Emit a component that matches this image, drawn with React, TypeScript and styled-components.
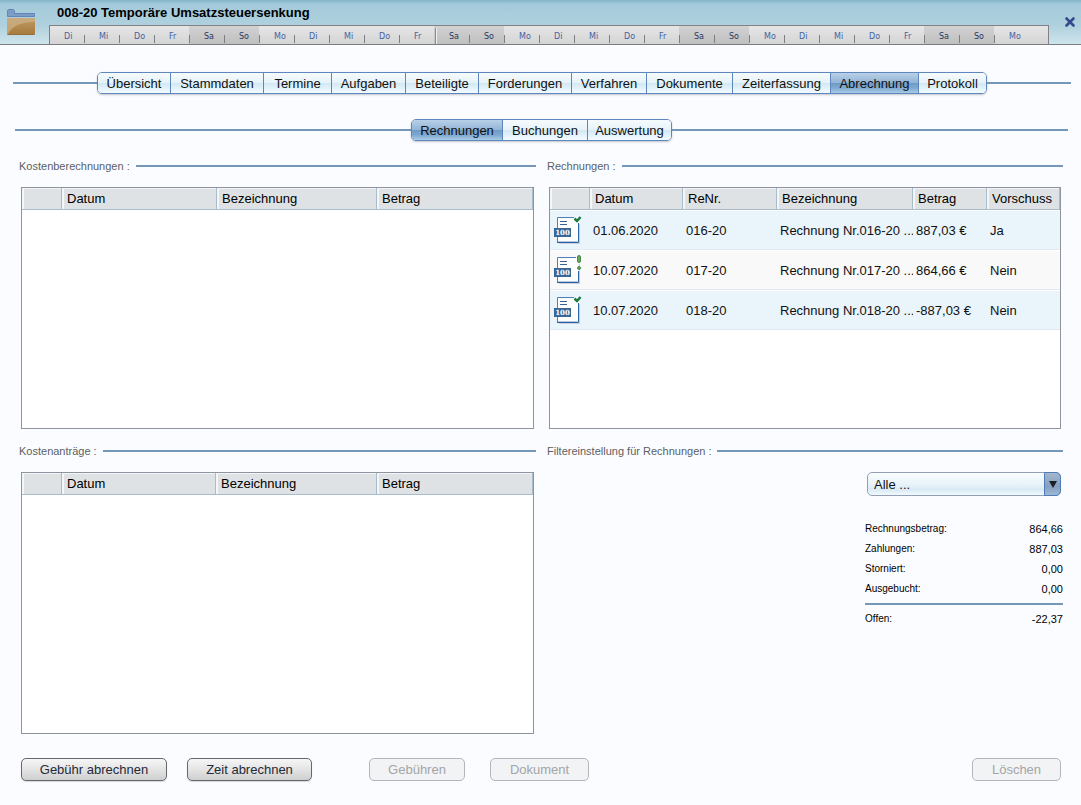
import React from "react";
import styled, { createGlobalStyle, css } from "styled-components";

const LINE = "#7598b8";
const SANS = '"Liberation Sans", Arial, sans-serif';

const GlobalStyle = createGlobalStyle`
  * { box-sizing: border-box; }
  body {
    margin: 0;
    background: #fbfcff;
    color: #111;
    font-family: ${SANS};
    font-size: 13px;
    line-height: 16px;
  }
  button, select { font: inherit; color: inherit; margin: 0; }
`;

const Header = styled.header`
  display: flex;
  height: 45px;
  border-bottom: 1px solid #7a7d80;
  background: linear-gradient(#84b5ca 0, #a3cadb 4px, #b0d1de 26px, #cfe4ec 100%);
`;

const FolderSlot = styled.div`
  width: 49px;
  padding: 9px 0 0 7px;
`;

const HeaderMain = styled.div`
  flex: 1;
  min-width: 0;
  display: flex;
  flex-direction: column;
  justify-content: space-between;
`;

const Title = styled.h1`
  margin: 0;
  padding: 5px 8px 0;
  font-size: 13px;
  line-height: 16px;
  font-weight: bold;
  white-space: nowrap;
  color: #000;
`;

const DayStrip = styled.ol`
  display: flex;
  height: 19px;
  margin: 0;
  padding: 0;
  list-style: none;
  border: 1px solid #808285;
  border-bottom: 0;
  border-left: 0;
  background: linear-gradient(#e6e6e6, #d4d4d4);
`;

const Day = styled.li<{ $weekend: boolean; $month: boolean; $grow: number }>`
  flex: ${(p) => p.$grow} 1 0;
  position: relative;
  padding: 6px 0 0;
  text-indent: 15px;
  font: 8px/10px "DejaVu Sans", sans-serif;
  color: #44619f;
  ${(p) =>
    p.$weekend &&
    css`
      color: #26365f;
      background: linear-gradient(#d2d2d2, #bfbfbf);
    `}
  &::before {
    content: "";
    position: absolute;
    left: 0;
    bottom: 1px;
    width: 1px;
    height: 8px;
    background: #7d7d88;
  }
  &:first-child::before {
    bottom: 0;
    height: 18px;
  }
  ${(p) =>
    p.$month &&
    css`
      &::before {
        left: 1px;
        bottom: 0;
        width: 2px;
        height: 16px;
        background: linear-gradient(90deg, #8a8a8a 50%, #f0f0f0 50%);
      }
    `}
`;

const CloseSlot = styled.div`
  width: 32px;
  padding: 16px 0 0 14px;
`;

const CloseButton = styled.button`
  display: block;
  width: 14px;
  height: 14px;
  padding: 0;
  border: 0;
  background: none;
`;

const TabRow = styled.nav<{ $inner?: boolean }>`
  display: flex;
  align-items: center;
  margin: ${(p) => (p.$inner ? "25px 13px 0 15px" : "27px 10px 0 13px")};
  &::before,
  &::after {
    content: "";
    flex: 1;
    height: 2px;
    background: ${LINE};
  }
`;

const TabGroup = styled.div`
  display: flex;
  height: 22px;
  border: 1px solid #5e88bd;
  border-radius: 5px;
  overflow: hidden;
  box-shadow: 0 1px 2px rgba(60, 70, 90, 0.3);
`;

const Tab = styled.button<{ $width: number; $active: boolean }>`
  width: ${(p) => p.$width}px;
  padding: 2px 0 0;
  border: 0;
  line-height: 16px;
  text-align: center;
  white-space: nowrap;
  background: ${(p) =>
    p.$active
      ? "linear-gradient(#b9d0e8 0, #93b5d6 48%, #6f9bc7 52%, #7fa9d1 75%, #a9cbe6 100%)"
      : "linear-gradient(#f6fbfd 0, #e6f3f9 48%, #d3e8f3 52%, #e2f2fa 75%, #f3fbff 100%)"};
  & + & {
    border-left: 1px solid #5e88bd;
  }
`;

const Columns = styled.main`
  display: grid;
  grid-template-columns: 517fr 516fr;
  column-gap: 11px;
  row-gap: 14px;
  padding: 17px 18px 0 19px;
`;

const Panel = styled.section`
  min-width: 0;
`;

const PanelTitle = styled.h2`
  display: flex;
  align-items: center;
  gap: 6px;
  height: 16px;
  margin: 0 0 13px;
  font-size: 11px;
  line-height: 16px;
  font-weight: normal;
  white-space: nowrap;
  color: #5c5f63;
  &::after {
    content: "";
    flex: 1;
    height: 2px;
    background: ${LINE};
  }
`;

const ListBox = styled.div<{ $height: number }>`
  height: ${(p) => p.$height}px;
  margin: 0 2px;
  border: 1px solid #8d939f;
  background: #fff;
  overflow: hidden;
`;

const Table = styled.table`
  width: 100%;
  table-layout: fixed;
  border-collapse: separate;
  border-spacing: 0;
`;

const Th = styled.th`
  height: 22px;
  padding: 0 0 0 5px;
  font-weight: normal;
  text-align: left;
  white-space: nowrap;
  background: #dee2e4;
  border-right: 1px solid #a9bccb;
  border-bottom: 1px solid #a9bccb;
  box-shadow: inset 2px 1px 0 #f3f5f6;
  color: #000;
`;

const Row = styled.tr`
  background: #e9f4fb;
  &:nth-child(even) {
    background: #f9f9f9;
  }
`;

const Td = styled.td`
  height: 40px;
  padding: 1px 0 0 3px;
  border-top: 1px solid #fff;
  border-bottom: 1px solid #e0e9ef;
  white-space: nowrap;
  overflow: hidden;
`;

const IconCell = styled(Td)`
  padding: 0 0 1px 4px;
`;

const Filter = styled.div`
  position: relative;
  width: 194px;
  height: 24px;
  margin: 0 2px 0 auto;
`;

const Select = styled.select`
  appearance: none;
  width: 100%;
  height: 24px;
  padding: 1px 22px 0 6px;
  border: 1px solid #93a0b4;
  border-radius: 5px;
  background: linear-gradient(#fafdfe 0, #e9f4f9 48%, #d9eaf5 75%, #f0f9fe 100%);
`;

const SelectArrow = styled.span`
  position: absolute;
  top: 0;
  right: 0;
  display: flex;
  align-items: center;
  justify-content: center;
  width: 17px;
  height: 24px;
  border: 1px solid #4f7cb8;
  border-radius: 0 5px 5px 0;
  background: linear-gradient(#a3b7ce 0, #86a0bf 60%, #9bb8d6 100%);
  pointer-events: none;
`;

const Totals = styled.dl`
  width: 198px;
  margin: 23px 0 0 auto;
  font-size: 10px;
  line-height: 20px;
  color: #000;
`;

const TotalLine = styled.div<{ $sum?: boolean }>`
  display: flex;
  justify-content: space-between;
  ${(p) =>
    p.$sum &&
    css`
      margin-top: 4px;
      padding-top: 4px;
      border-top: 2px solid ${LINE};
    `}
  dd {
    margin: 0;
    font-size: 11px;
  }
`;

const Footer = styled.footer`
  display: flex;
  padding: 24px 20px 24px 21px;
`;

const Action = styled.button<{ $width: number; $gap?: string }>`
  width: ${(p) => p.$width}px;
  height: 23px;
  margin-left: ${(p) => p.$gap ?? "0"};
  padding: 0;
  border: 1px solid #66686b;
  border-radius: 5px;
  background: linear-gradient(#f6f6f6, #e4e4e4 50%, #cfcfcf);
  box-shadow: 0 1px 1px rgba(0, 0, 0, 0.15);
  color: #222b38;
  &:disabled {
    border-color: #b3b5b8;
    background: #f2f3f4;
    box-shadow: none;
    color: #a2a5a9;
  }
`;

const WEEK = ["Di", "Mi", "Do", "Fr", "Sa", "So", "Mo"];
const DAYS = Array.from({ length: 28 }, (_, i) => WEEK[i % 7]);
const MONTH_START = 11;

const MAIN_TABS: [string, number][] = [
  ["Übersicht", 72],
  ["Stammdaten", 93],
  ["Termine", 68],
  ["Aufgaben", 74],
  ["Beteiligte", 73],
  ["Forderungen", 93],
  ["Verfahren", 75],
  ["Dokumente", 86],
  ["Zeiterfassung", 98],
  ["Abrechnung", 88],
  ["Protokoll", 68],
];

const SUB_TABS: [string, number][] = [
  ["Rechnungen", 90],
  ["Buchungen", 85],
  ["Auswertung", 84],
];

type Column = { label: string; width?: number };

const COST_COLUMNS: Column[] = [
  { label: "", width: 40 },
  { label: "Datum", width: 155 },
  { label: "Bezeichnung", width: 160 },
  { label: "Betrag" },
];

const REQUEST_COLUMNS: Column[] = [
  { label: "", width: 40 },
  { label: "Datum", width: 154 },
  { label: "Bezeichnung", width: 161 },
  { label: "Betrag" },
];

const INVOICE_COLUMNS: Column[] = [
  { label: "", width: 40 },
  { label: "Datum", width: 93 },
  { label: "ReNr.", width: 94 },
  { label: "Bezeichnung" },
  { label: "Betrag", width: 74 },
  { label: "Vorschuss", width: 73 },
];

type Status = "paid" | "open";

const INVOICES: { status: Status; cells: string[] }[] = [
  { status: "paid", cells: ["01.06.2020", "016-20", "Rechnung Nr.016-20 ...", "887,03 €", "Ja"] },
  { status: "open", cells: ["10.07.2020", "017-20", "Rechnung Nr.017-20 ...", "864,66 €", "Nein"] },
  { status: "paid", cells: ["10.07.2020", "018-20", "Rechnung Nr.018-20 ...", "-887,03 €", "Nein"] },
];

const TOTALS: [string, string][] = [
  ["Rechnungsbetrag:", "864,66"],
  ["Zahlungen:", "887,03"],
  ["Storniert:", "0,00"],
  ["Ausgebucht:", "0,00"],
];

const IconSvg = styled.svg`
  display: block;
`;

function FolderIcon() {
  return (
    <IconSvg width="28" height="26" viewBox="0 0 28 26" aria-hidden="true">
      <defs>
        <linearGradient id="folder" x1="0" y1="0" x2="0" y2="1">
          <stop offset="0" stopColor="#bf9a63" />
          <stop offset="1" stopColor="#a5793b" />
        </linearGradient>
      </defs>
      <path d="M0.5 7V1.5L1.5 0.500H6.500L7.500 1.500V4.500H27.500V7.500H0.500Z" fill="#7d9cc6" stroke="#6284b6" />
      <rect x="0" y="9" width="28" height="17" rx="1" fill="url(#folder)" />
      <path d="M1 9H27Q28 9 28 10V13C14 13 5 17 1 25Q0 25 0 24V10Q0 9 1 9Z" fill="#cbb088" opacity=".75" />
      <path d="M1 25.500H27" stroke="#97703a" />
    </IconSvg>
  );
}

function InvoiceIcon({ status }: { status: Status }) {
  const open = status === "open";
  return (
    <IconSvg width="29" height="30" viewBox="0 0 29 30" aria-hidden="true">
      <path d="M5 28.500H25.500V9" fill="none" stroke="#c9ced6" />
      <rect x="3" y="2" width="22" height="26" fill="#fff" />
      <path d={open ? "M22 2.500H3.500V28" : "M20 2.500H3.500V28"} fill="none" stroke="#4f7db8" />
      <path d={open ? "M3 27.500H24.500V16" : "M3 27.500H24.500V8"} fill="none" stroke="#2b62a8" />
      <path d="M4 26.500H23.500" stroke="#2b62a8" opacity=".35" />
      <path d="M6 6.500H13M6 9.500H13" stroke="#3a5f96" />
      <rect x="0" y="13" width="17" height="9" fill="#3b6798" />
      <text x="8.500" y="20" textAnchor="middle" fontFamily="DejaVu Serif, serif" fontSize="7" fontWeight="bold" fill="#fff">
        100
      </text>
      {open ? (
        <g fill="#6cab5c" stroke="#458a48">
          <rect x="23.500" y="0.500" width="3" height="7" rx="1.500" />
          <circle cx="25" cy="13" r="1.500" />
        </g>
      ) : (
        <path d="M20.500 3.500L23 6L26.500 2" fill="none" stroke="#157a3c" strokeWidth="2.500" />
      )}
    </IconSvg>
  );
}

function CloseIcon() {
  return (
    <IconSvg width="14" height="14" viewBox="0 0 14 14" aria-hidden="true">
      <path d="M3.500 2.500L10.500 9.500M10.500 2.500L3.500 9.500" stroke="#34488c" strokeWidth="2.600" strokeLinecap="round" />
    </IconSvg>
  );
}

function Tabs({ items, active, inner }: { items: [string, number][]; active: string; inner?: boolean }) {
  return (
    <TabRow $inner={inner}>
      <TabGroup>
        {items.map(([label, width]) => (
          <Tab key={label} type="button" $width={width} $active={label === active}>
            {label}
          </Tab>
        ))}
      </TabGroup>
    </TabRow>
  );
}

function List({ columns, height, children }: { columns: Column[]; height: number; children?: React.ReactNode }) {
  return (
    <ListBox $height={height}>
      <Table>
        <colgroup>
          {columns.map((c, i) => (
            <col key={i} width={c.width} />
          ))}
        </colgroup>
        <thead>
          <tr>
            {columns.map((c, i) => (
              <Th key={i}>{c.label}</Th>
            ))}
          </tr>
        </thead>
        <tbody>{children}</tbody>
      </Table>
    </ListBox>
  );
}

export default function App() {
  return (
    <>
      <GlobalStyle />
      <Header>
        <FolderSlot>
          <FolderIcon />
        </FolderSlot>
        <HeaderMain>
          <Title>008-20 Temporäre Umsatzsteuersenkung</Title>
          <DayStrip>
            {DAYS.map((day, i) => (
              <Day
                key={i}
                $weekend={day === "Sa" || day === "So"}
                $month={i === MONTH_START}
                $grow={i === DAYS.length - 1 ? 54 : 35}
              >
                {day}
              </Day>
            ))}
          </DayStrip>
        </HeaderMain>
        <CloseSlot>
          <CloseButton type="button" aria-label="Schließen">
            <CloseIcon />
          </CloseButton>
        </CloseSlot>
      </Header>

      <Tabs items={MAIN_TABS} active="Abrechnung" />
      <Tabs items={SUB_TABS} active="Rechnungen" inner />

      <Columns>
        <Panel>
          <PanelTitle>Kostenberechnungen :</PanelTitle>
          <List columns={COST_COLUMNS} height={242} />
        </Panel>
        <Panel>
          <PanelTitle>Rechnungen :</PanelTitle>
          <List columns={INVOICE_COLUMNS} height={242}>
            {INVOICES.map(({ status, cells }) => (
              <Row key={cells[1]}>
                <IconCell>
                  <InvoiceIcon status={status} />
                </IconCell>
                {cells.map((cell, i) => (
                  <Td key={i}>{cell}</Td>
                ))}
              </Row>
            ))}
          </List>
        </Panel>
        <Panel>
          <PanelTitle>Kostenanträge :</PanelTitle>
          <List columns={REQUEST_COLUMNS} height={262} />
        </Panel>
        <Panel>
          <PanelTitle>Filtereinstellung für Rechnungen :</PanelTitle>
          <Filter>
            <Select aria-label="Filter für Rechnungen" defaultValue="all">
              <option value="all">Alle ...</option>
            </Select>
            <SelectArrow>
              <svg width="8" height="7" viewBox="0 0 8 7" aria-hidden="true">
                <path d="M0 0H8L4 7Z" fill="#1c1f24" />
              </svg>
            </SelectArrow>
          </Filter>
          <Totals>
            {TOTALS.map(([label, value]) => (
              <TotalLine key={label}>
                <dt>{label}</dt>
                <dd>{value}</dd>
              </TotalLine>
            ))}
            <TotalLine $sum>
              <dt>Offen:</dt>
              <dd>-22,37</dd>
            </TotalLine>
          </Totals>
        </Panel>
      </Columns>

      <Footer>
        <Action type="button" $width={146}>Gebühr abrechnen</Action>
        <Action type="button" $width={125} $gap="20px">Zeit abrechnen</Action>
        <Action type="button" $width={96} $gap="57px" disabled>Gebühren</Action>
        <Action type="button" $width={99} $gap="25px" disabled>Dokument</Action>
        <Action type="button" $width={89} $gap="auto" disabled>Löschen</Action>
      </Footer>
    </>
  );
}
